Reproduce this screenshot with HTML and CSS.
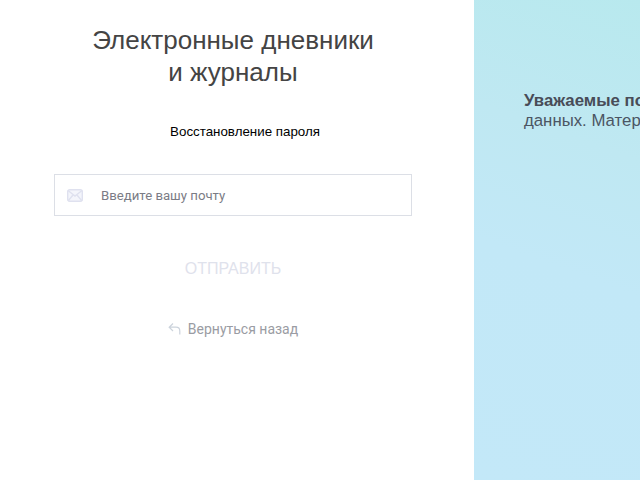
FILE: index.html
```html
<!DOCTYPE html>
<html lang="ru">
<head>
<meta charset="utf-8">
<title>Восстановление пароля</title>
<link rel="stylesheet" href="styles.css">
</head>
<body>
<main class="page">
  <section class="form-side">
    <h1 class="title">Электронные дневники<br>и журналы</h1>
    <p class="subtitle">Восстановление пароля</p>
    <label class="field">
      <svg class="mail-icon" viewBox="0 0 16 13" width="16" height="13" fill="none" stroke="#dfe1ef" stroke-width="1.4"><rect x="0.7" y="0.7" width="14.6" height="11.6" rx="2" fill="#f4f5fb"/><path d="M1 1.500 8 7l7-5.500M1 12l5-6M15 12l-5-6"/></svg>
      <span class="placeholder">Введите вашу почту</span>
    </label>
    <div class="send">ОТПРАВИТЬ</div>
    <a class="back">
      <svg class="back-icon" viewBox="0 0 13 13" width="13" height="13" fill="none" stroke="#ccd3dc" stroke-width="1.2"><path d="M5 0.500 1.200 4.200 5 8M1.200 4.200H8c2.400 0 3.800 1.500 3.800 3.800V11.500"/></svg>
      <span class="back-label">Вернуться назад</span>
    </a>
  </section>
  <aside class="info-side">
    <p class="notice"><b>Уважаемые пользователи!</b> Проверьте корректность<br>данных. Материалы будут отправлены на почту.</p>
  </aside>
</main>
</body>
</html>
```
FILE: styles.css
```css
* { box-sizing: border-box; }
html, body { margin: 0; height: 100%; overflow: hidden; background: #fff; }
body { font-family: "Liberation Sans", Arial, sans-serif; }
.page { display: flex; width: 640px; height: 480px; overflow: hidden; }
.form-side { width: 474px; flex: none; padding: 24px 62px 0 54px; display: flex; flex-direction: column; align-items: center; }
.title { margin: 0; font-size: 26px; line-height: 32px; font-weight: 400; color: #444; text-align: center; white-space: nowrap; }
.subtitle { margin: 36px 0 0 24px; font-size: 13.330px; line-height: 16px; color: #000; white-space: nowrap; }
.field { margin-top: 34px; width: 358px; height: 42px; flex: none; border: 1px solid #dcdfe6; display: flex; align-items: center; padding-left: 12px; }
.mail-icon { flex: none; }
.placeholder { margin-left: 18px; font-size: 13.200px; color: #7b7c85; font-family: "Roboto", sans-serif; }
.send { margin-top: 43px; font-size: 16px; line-height: 20px; color: #dfe2ec; }
.back { margin-top: 41px; display: flex; align-items: center; gap: 7px; font-size: 14px; line-height: 18px; color: #9a9ca3; font-family: "Roboto", sans-serif; }
.back-icon { flex: none; }
.info-side { flex: 1; min-width: 0; height: 480px; padding: 91px 0 0 50px; background: linear-gradient(200deg, #b8e9ee 0%, #bfe8f2 30%, #c2e8f7 55%, #c3e8f8 100%); overflow: hidden; }
.notice { margin: 0; width: 500px; font-size: 16.800px; line-height: 20px; color: #4b5563; white-space: nowrap; }
.notice b { color: #484c58; }
```
